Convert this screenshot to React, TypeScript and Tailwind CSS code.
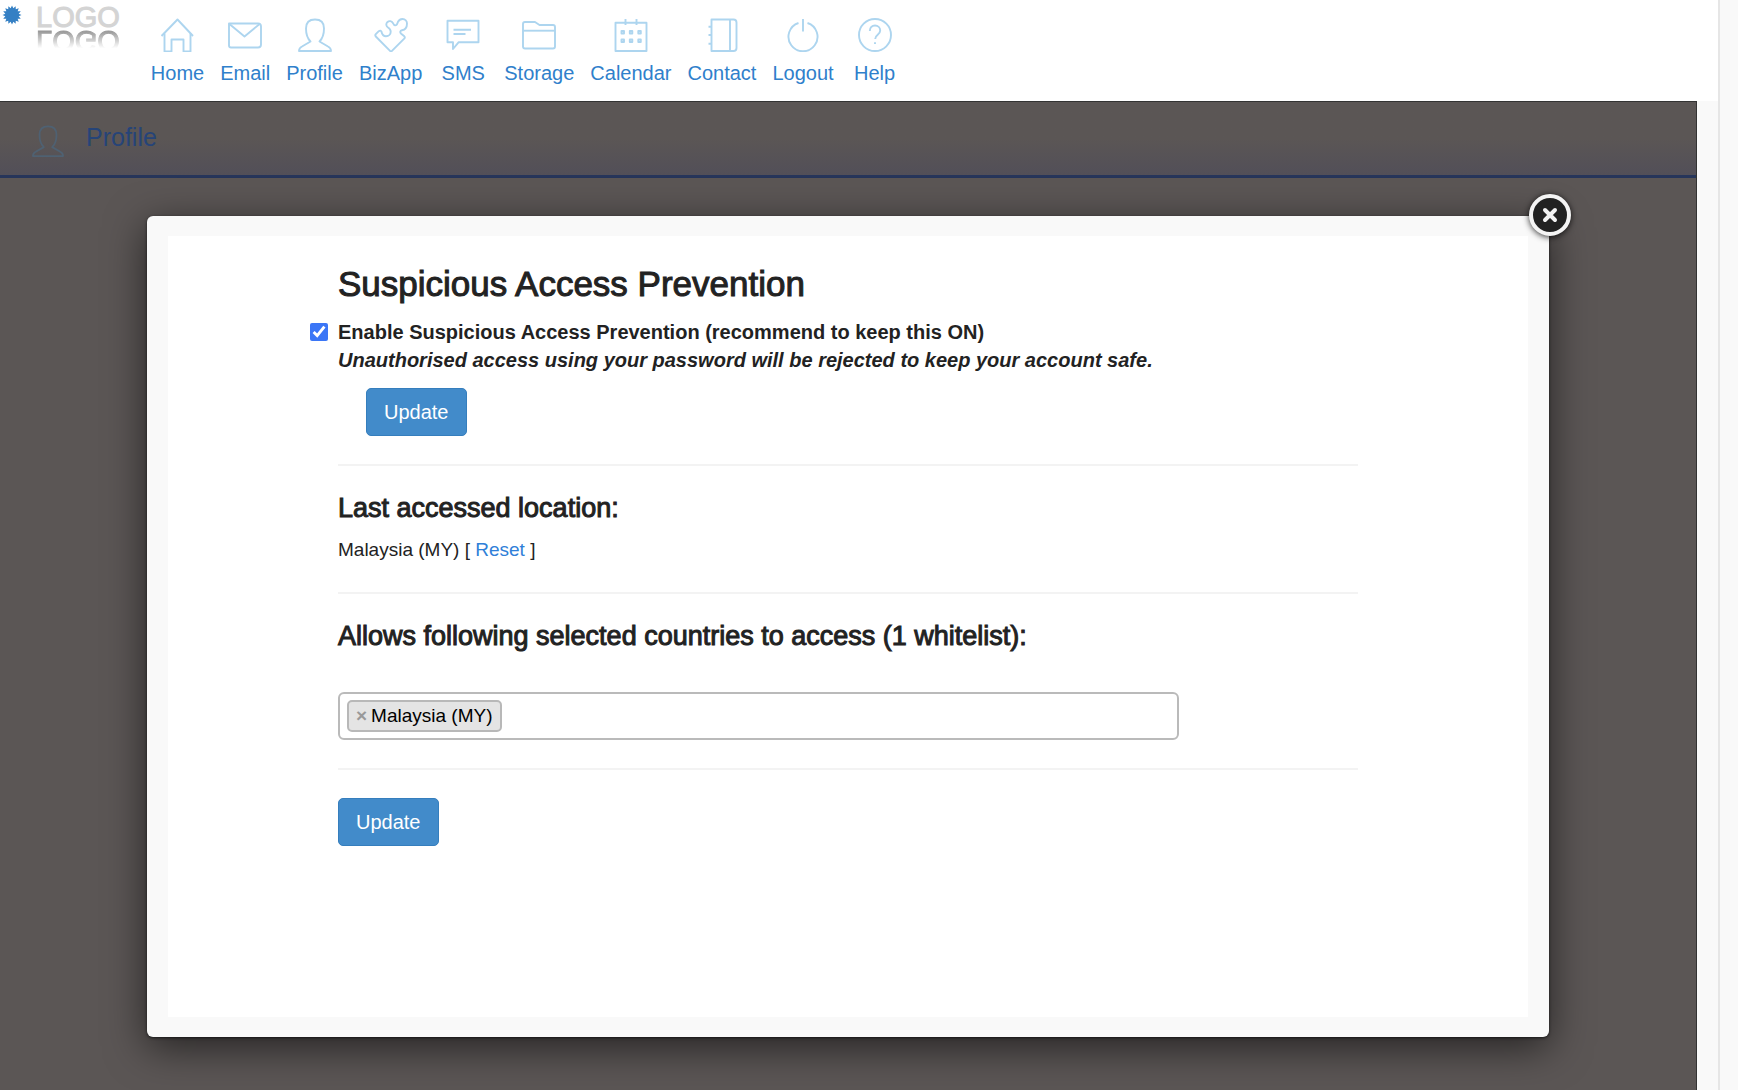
import React, { useState } from "react";

const navItems = [
  {
    label: "Home",
    icon: (
      <>
        <path d="M1.5 18 17.5 1.5 33 18" />
        <path d="M4.5 15.5v18h7v-12h12v12h7v-18" />
      </>
    ),
  },
  {
    label: "Email",
    icon: (
      <>
        <path d="M1 5.500h29q3 0 3 3v18q0 3-3 3H3q-2 0-2-2z" />
        <path d="m2 6.500 14.500 12L31 6.500" />
      </>
    ),
  },
  {
    label: "Profile",
    icon: (
      <path d="M17 1.500c-6 0-9 3.500-9 9 0 5.500 1.500 10 4.500 13L4 28.500Q1 30 1 33h32q0-3-3-4.500l-8.500-5c3-3 4.500-7.500 4.500-13 0-5.500-3-9-9-9z" />
    ),
  },
  {
    label: "BizApp",
    icon: (
      <path d="M1.800 18.500q-1-1.200 0-2.300L4.800 13.200q1.700-1.400 2.700.5c.6 2.800 2 4.500 4.500 4.500 2.800 0 4.700-1.900 4.700-4.500 0-2.200-1.200-3.300-2.700-4.200-2-1.200-2.200-3.700-.7-5.300 1.800-1.700 4.500-1.300 5.500.7.700 1.500 1.200 2.500 2.500 2.500 1.700 0 2-1.700 2.500-3.200C24.700 2 26.700 1 28.500 1 31.200 1 33 3 33 5.500c0 3.500-2 6.300-5 6.800-2 .4-2.300 2-.8 3.400l2.800 2.300q1.500 1.300.2 2.700L18.200 32.700q-1.200 1-2.400 0z" />
    ),
  },
  {
    label: "SMS",
    icon: (
      <>
        <path d="M1.500 2.800h31v21.500H12.500l-5.500 6.700v-6.700H1.500z" />
        <path d="M7.500 11.700h17.500M7.500 16h12" />
      </>
    ),
  },
  {
    label: "Storage",
    icon: (
      <>
        <path d="M1 28.500V6q0-2 2-2h10l4.500 3H31q2 0 2 2v19.500q0 2-2 2H3q-2 0-2-2z" />
        <path d="M1 12.700h32" />
      </>
    ),
  },
  {
    label: "Calendar",
    icon: (
      <>
        <path d="M1.500 4.800h31v28.200h-31zM11.500 1v6M22.500 1v6" />
        <path d="M7.500 13h2.500v2.500H7.500zM15.800 13h2.500v2.500h-2.500zM24.300 13h2.500v2.500h-2.500zM7.500 21.500h2.500v2.500H7.500zM15.800 21.500h2.500v2.500h-2.500zM24.300 21.500h2.500v2.500h-2.500z" />
      </>
    ),
  },
  {
    label: "Contact",
    icon: (
      <>
        <path d="M6.500 1.500h22q3 0 3 3v25.500q0 3-3 3h-22zM25 1.500v31.500" />
        <path d="M3.500 8.700h3M3.500 17h3M3.500 25.700h3" />
      </>
    ),
  },
  {
    label: "Logout",
    icon: (
      <>
        <path d="M12.500 5a14.500 14.500 0 1 0 9 0" />
        <path d="M17 1v12.500" />
      </>
    ),
  },
  {
    label: "Help",
    icon: (
      <>
        <circle cx="17" cy="17" r="16" />
        <path d="M11.800 13c0-3.500 2.300-5.500 5.200-5.500s5.200 2 5.200 5c0 4.500-5 4-5 8.500M17 24.300v1.700" />
      </>
    ),
  },
];

const profileIcon = navItems[2].icon;

const Icon = ({
  children,
  className,
}: {
  children: React.ReactNode;
  className: string;
}) => (
  <svg
    viewBox="0 0 34 34"
    className={className}
    fill="none"
    stroke="currentColor"
    strokeWidth="1.900"
    strokeLinejoin="round"
    aria-hidden="true"
  >
    {children}
  </svg>
);

// 16 pointed badge in the top left corner
const Burst = () => {
  const points = Array.from({ length: 32 }, (_, i) => {
    const r = i % 2 ? 6.8 : 9.5;
    const a = (i * Math.PI) / 16;
    return `${(10 + r * Math.sin(a)).toFixed(2)},${(10 - r * Math.cos(a)).toFixed(2)}`;
  }).join(" ");
  return (
    <svg viewBox="0 0 20 20" className="mt-[5px] size-5 fill-[#3580c4]" aria-hidden="true">
      <polygon points={points} />
    </svg>
  );
};

// the mirrored copy under the word is decoration only
const Logo = () => (
  <div className="flex flex-col text-[29px] leading-6 text-[#d4d4d4] select-none [-webkit-text-stroke:1px] after:-scale-y-100 after:text-[#999999] after:content-['LOGO'] after:[mask-image:linear-gradient(to_top,black_10%,transparent_80%)]">
    LOGO
  </div>
);

const Header = () => (
  <header className="flex h-[101px] items-start bg-white pl-[2px]">
    <Burst />
    <div className="ml-[14px] pt-[5px]">
      <Logo />
    </div>
    <nav className="ml-[31px] flex gap-4 pt-[18px]">
      {navItems.map((item) => (
        <a
          key={item.label}
          href="#"
          className="flex min-w-[50px] flex-col items-center gap-[7px] text-[20px] leading-7 text-[#2f80cb]"
        >
          <Icon className="size-[34px] text-[#add5ef]">{item.icon}</Icon>
          {item.label}
        </a>
      ))}
    </nav>
  </header>
);

const UpdateButton = () => (
  <button
    type="button"
    className="h-12 rounded-[5px] border border-[#357ebd] bg-[#428bca] px-[17px] text-[20px] text-white"
  >
    Update
  </button>
);

const Divider = () => <hr className="my-7 border-t-2 border-[#f3f3f3]" />;

const SubHeading = ({ children }: { children: React.ReactNode }) => (
  <h2 className="text-[27px] leading-7 [-webkit-text-stroke:1px]">{children}</h2>
);

const PreventionForm = () => {
  const [enabled, setEnabled] = useState(true);
  const [countries, setCountries] = useState(["Malaysia (MY)"]);

  return (
    <div className="mx-auto w-3/4 pt-7 text-[19px] leading-7 text-[#222222]">
      <h1 className="text-[35px] leading-10 [-webkit-text-stroke:1px]">
        Suspicious Access Prevention
      </h1>
      <label className="-ml-7 mt-[14px] flex items-start gap-[10px] text-[20px] font-bold">
        <input
          type="checkbox"
          checked={enabled}
          onChange={(e) => setEnabled(e.target.checked)}
          className="mt-[5px] size-[18px] accent-[#3b76f6]"
        />
        <span>
          Enable Suspicious Access Prevention (recommend to keep this ON)
          <br />
          <em>
            Unauthorised access using your password will be rejected to keep
            your account safe.
          </em>
        </span>
      </label>
      <div className="mt-[14px] ml-7">
        <UpdateButton />
      </div>

      <Divider />

      <SubHeading>Last accessed location:</SubHeading>
      <p className="mt-[14px]">
        Malaysia (MY) [{" "}
        <a href="#" className="text-[#2f80d8]">
          Reset
        </a>{" "}
        ]
      </p>

      <Divider />

      <SubHeading>
        Allows following selected countries to access (1 whitelist):
      </SubHeading>
      <div className="mt-[42px] flex h-12 w-[841px] max-w-full items-center gap-2 rounded-md border-2 border-[#bababa] px-[7px]">
        {countries.map((country) => (
          <span
            key={country}
            className="flex h-8 items-center gap-1 rounded-[5px] border-2 border-[#b8b8b8] bg-[#e4e4e4] px-[7px] text-black"
          >
            <button
              type="button"
              aria-label={`Remove ${country}`}
              onClick={() => setCountries(countries.filter((c) => c !== country))}
              className="font-bold text-[#999999]"
            >
              ×
            </button>
            {country}
          </span>
        ))}
        <input
          type="text"
          aria-label="Countries allowed to access"
          className="min-w-0 flex-1 outline-none"
        />
      </div>

      <Divider />

      <UpdateButton />
    </div>
  );
};

const Modal = () => (
  <div
    role="dialog"
    aria-label="Suspicious Access Prevention"
    className="relative mx-[147px] mt-[38px] mb-[53px] flex flex-1 flex-col rounded-md bg-[#f9f9f9] px-[21px] py-5 shadow-[0_10px_40px_rgba(0,0,0,0.6),0_1px_3px_#222]"
  >
    <div className="flex-1 bg-white pb-10">
      <PreventionForm />
    </div>
    <button
      type="button"
      aria-label="Close"
      className="absolute -top-[22px] -right-[22px] flex size-[42px] items-center justify-center rounded-full border-4 border-[#f4f4f4] bg-[#222222] shadow-[0_1px_6px_rgba(0,0,0,0.8)]"
    >
      <svg viewBox="0 0 16 16" className="size-4" stroke="#f2f2f2" strokeWidth="4" strokeLinecap="round">
        <path d="m3 3 10 10M13 3 3 13" />
      </svg>
    </button>
  </div>
);

const App = () => {
  return (
    <div className="flex min-h-screen bg-[#f9f9f9] font-['Liberation_Sans',Arial,sans-serif]">
      <div className="flex flex-1 flex-col border-r-2 border-[#e6e6e6]">
        <Header />
        <main className="mr-[21px] flex flex-1 flex-col border-t border-r border-[#333333] bg-[#5b5655]">
          <div className="flex h-[76px] items-start gap-[22px] border-b-[3px] border-[#26355a] bg-linear-to-b from-[#5b5655] from-50% to-[#524f58] pt-[19px] pl-8">
            <Icon className="mt-1 size-8 text-[#4f6172]">{profileIcon}</Icon>
            <p className="text-[25px] leading-8 text-[#264478]">Profile</p>
          </div>
          <Modal />
        </main>
      </div>
      <div className="w-[18px]" />
    </div>
  );
};

export default App;
